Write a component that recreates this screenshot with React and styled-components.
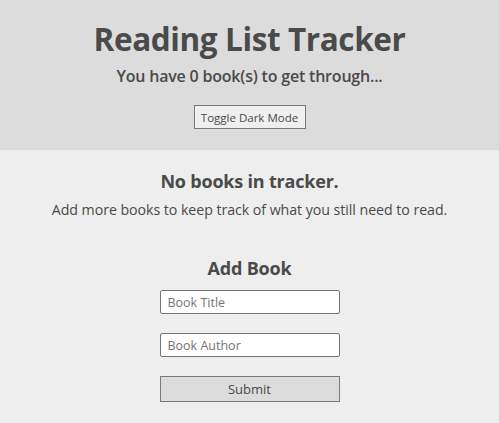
import React from 'react';
import styled, { createGlobalStyle } from 'styled-components';

const GlobalStyle = createGlobalStyle`
    body {
        margin: 0;
        background: #eeeeee;
        font-family: 'Open Sans', 'Noto Sans', sans-serif;
        color: #4a4a4a;
    }
`;

const Header = styled.header`
    background: #dcdcdc;
    padding: 20px 0 21px;
    display: flex;
    flex-direction: column;
    align-items: center;
`;

const Title = styled.h1`
    margin: 0;
    font-size: 31.5px;
    line-height: 38px;
    font-weight: 700;
    letter-spacing: -0.4px;
`;

const Subtitle = styled.p`
    margin: 8px 0 0;
    font-size: 16px;
    line-height: 20px;
    font-weight: 600;
    letter-spacing: -0.2px;
`;

const Button = styled.button`
    font-family: inherit;
    color: #4a4a4a;
    font-size: ${(props) => (props.wide ? '13px' : '11.5px')};
    background: ${(props) => (props.wide ? '#dcdcdc' : '#efefef')};
    border: 1px solid #7a7a7a;
    border-radius: 0;
    padding: 0;
    width: ${(props) => (props.wide ? '180px' : '112px')};
    height: ${(props) => (props.wide ? '26px' : '24px')};
    margin-top: 19px;
    cursor: pointer;
`;

const Main = styled.main`
    padding-top: 20px;
    display: flex;
    flex-direction: column;
    align-items: center;
`;

const Heading = styled.h2`
    margin: ${(props) => (props.spaced ? '38px 0 0' : '0')};
    font-size: 18px;
    line-height: 22px;
    font-weight: 700;
    letter-spacing: -0.2px;
`;

const Note = styled.p`
    margin: 9px 0 0;
    font-size: 14.2px;
    line-height: 18px;
    letter-spacing: -0.05px;
`;

const Form = styled.form`
    display: flex;
    flex-direction: column;
    align-items: center;
    margin-top: 11px;
`;

const Input = styled.input`
    box-sizing: border-box;
    width: 180px;
    height: 24px;
    margin-top: ${(props) => (props.first ? '0' : '19px')};
    border: 1px solid #767676;
    border-radius: 2px;
    background: #fff;
    padding: 0 7px;
    font-family: inherit;
    font-size: 12.5px;
    color: #4a4a4a;
    &::placeholder {
        color: #757575;
    }
`;

const App = () => {
    return (
        <>
            <GlobalStyle />
            <Header>
                <Title>Reading List Tracker</Title>
                <Subtitle>You have 0 book(s) to get through...</Subtitle>
                <Button>Toggle Dark Mode</Button>
            </Header>
            <Main>
                <Heading>No books in tracker.</Heading>
                <Note>Add more books to keep track of what you still need to read.</Note>
                <Heading spaced>Add Book</Heading>
                <Form onSubmit={(e) => e.preventDefault()}>
                    <Input first placeholder='Book Title' />
                    <Input placeholder='Book Author' />
                    <Button wide type='submit'>
                        Submit
                    </Button>
                </Form>
            </Main>
        </>
    );
};

export default App;
